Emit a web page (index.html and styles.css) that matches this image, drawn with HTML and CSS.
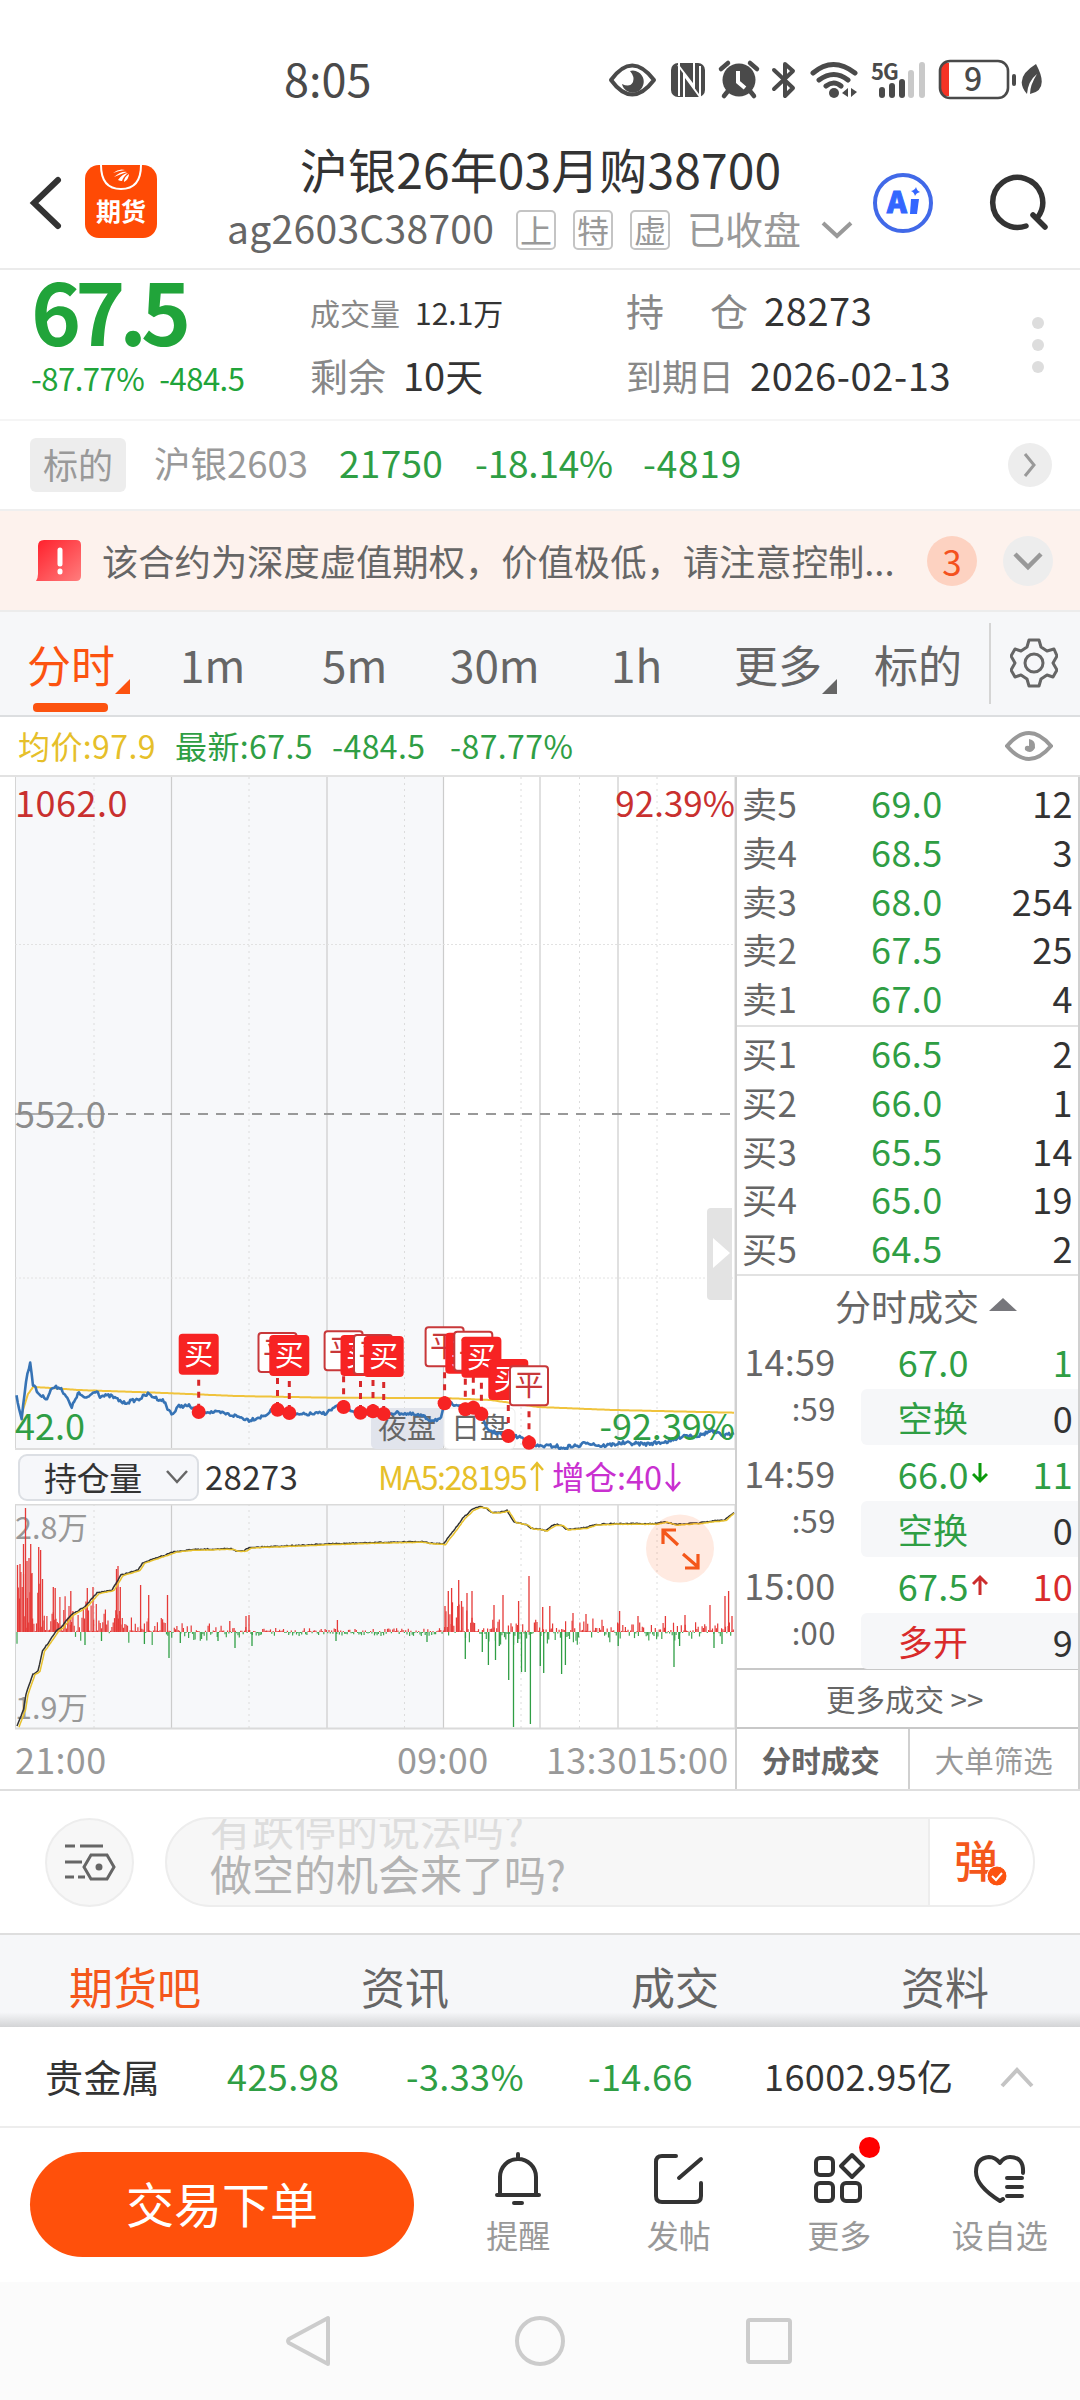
FILE: index.html
```html
<!DOCTYPE html>
<html lang="zh-CN">
<head>
  <meta charset="UTF-8">
  <title>沪银26年03月购38700</title>
  <meta name="viewport" content="width=device-width, initial-scale=1.0">
  <link rel="stylesheet" href="styles.css">
</head>
<body>
  <div class="status-bar">
    <span class="clock">8:05</span>
    <svg class="status-icons" width="450" height="50" viewBox="600 55 450 50">
      <g fill="#4a4a4a">
        <path d="M611 80Q632 51 654 80Q632 109 611 80Z" fill="none" stroke="#4a4a4a" stroke-width="4" stroke-linejoin="round"/>
        <path d="M630 71a11 11 0 1 1-8 13q8 4 11-2q2-5-3-11z"/>
        <rect x="671" y="63" width="34" height="34" rx="7"/>
        <path d="M679 63V96M684 97V75L700 97M678 65L694 86V63M700 66V97" fill="none" stroke="#fff" stroke-width="2"/>
        <circle cx="739" cy="80" r="16.5"/>
        <path d="M721 69l7-6M757 69l-7-6M728 91l-4 5M750 91l4 5" stroke="#4a4a4a" stroke-width="4.5" stroke-linecap="round"/>
        <path d="M738 71v11l7 6" fill="none" stroke="#fff" stroke-width="4"/>
        <path d="M774 70l19 18l-8 8V64l8 7l-19 18" fill="none" stroke="#4a4a4a" stroke-width="4" stroke-linejoin="round" stroke-linecap="round"/>
        <path d="M813 73q20-17 42 0M819 80q15-11 29 0M826 86q8-6 15 0" fill="none" stroke="#4a4a4a" stroke-width="5" stroke-linecap="round"/>
        <circle cx="834" cy="93" r="5"/>
        <path d="M848 88v9l-6-4zM851 88l6 4-6 5z"/>
        <text class="net" x="871" y="80">5G</text>
        <rect x="879" y="87" width="6" height="11" rx="3"/>
        <rect x="889" y="83" width="6" height="15" rx="3"/>
        <rect x="899" y="79" width="6" height="19" rx="3"/>
        <rect x="908" y="70" width="6" height="28" rx="3" fill="#c9c9c9"/>
        <rect x="919" y="62" width="6" height="36" rx="3" fill="#c9c9c9"/>
        <path d="M943 63h6v33h-6q-2-2-2-6V69q0-4 2-6z" fill="#f53325"/>
        <rect x="940" y="61" width="68" height="37" rx="10" fill="none" stroke="#4a4a4a" stroke-width="2.6"/>
        <text class="battery" x="964" y="91">9</text>
        <rect x="1012" y="74" width="4" height="12" rx="2"/>
        <path d="M1036 64q14 26-6 30q0-9 7-20q-9 7-10 20q-14-16 9-30z"/>
      </g>
    </svg>
  </div>

  <header class="header">
    <svg class="back" width="36" height="60" viewBox="0 0 36 60"><path d="M31 8L7 31L31 54" fill="none" stroke="#333" stroke-width="6" stroke-linecap="round"/></svg>
    <div class="logo">
      <svg width="72" height="28" viewBox="0 0 72 28"><path d="M16 0q0 24 20 24t20-24" fill="none" stroke="#fff" stroke-width="2"/><path d="M28 8q6-5 12-3q-7 1-12 3zM29 12q7-6 13-5q-6 2-13 5zM33 15q4-6 10-7q-5 4-6 8q-2 0-4-1zM39 17q0-5 5-8q0 5-5 8z" fill="#fff"/></svg>
      <b>期货</b>
    </div>
    <div class="title">
      <h1>沪银26年03月购38700</h1>
      <div class="subtitle">
        <span class="code">ag2603C38700</span>
        <span class="tag">上</span><span class="tag">特</span><span class="tag">虚</span>
        <span class="closed">已收盘</span>
        <svg width="32" height="20" viewBox="0 0 32 20"><path d="M2 3L16 16L30 3" fill="none" stroke="#999" stroke-width="4"/></svg>
      </div>
    </div>
    <svg class="ai" width="62" height="62" viewBox="0 0 62 62">
      <circle cx="31" cy="31" r="28" fill="none" stroke="#4169e8" stroke-width="4"/>
      <text x="15" y="41">A</text><path d="M39 27h8l-2 15h-7z" fill="#3366ff"/><path d="M44 15q1 4 4 5q-4 1-5 4q-1-4-4-5q4-1 5-4z" fill="#3366ff"/>
    </svg>
    <svg class="search" width="62" height="62" viewBox="0 0 62 62"><path d="M37 55A25 25 0 1 1 49 46M44 44L56 56" fill="none" stroke="#333" stroke-width="5.5" stroke-linecap="round"/></svg>
  </header>

  <section class="quote">
    <div class="price">
      <div class="last">67.5</div>
      <div class="change"><span>-87.77%</span><span>-484.5</span></div>
    </div>
    <div class="stats">
      <div class="stat small"><label>成交量</label><span>12.1万</span></div>
      <div class="stat"><label>剩余</label><span>10天</span></div>
    </div>
    <div class="stats wide">
      <div class="stat"><label class="spread">持<i></i>仓</label><span>28273</span></div>
      <div class="stat date"><label>到期日</label><span>2026-02-13</span></div>
    </div>
    <div class="dots"><i></i><i></i><i></i></div>
  </section>

  <section class="underlying">
    <span class="badge">标的</span>
    <span class="name">沪银2603</span>
    <span class="u1">21750</span>
    <span class="u2">-18.14%</span>
    <span class="u3">-4819</span>
    <span class="round"><svg width="16" height="28" viewBox="0 0 16 28"><path d="M3 3L12 14L3 25" fill="none" stroke="#999" stroke-width="3"/></svg></span>
  </section>

  <section class="notice">
    <svg width="46" height="44" viewBox="0 0 46 44">
      <defs><linearGradient id="warn" x1="0" y1="0" x2="1" y2="1"><stop offset="0" stop-color="#ff1f2b"/><stop offset="1" stop-color="#ff7d7d"/></linearGradient></defs>
      <path d="M8 1h32q5 0 5 5v31q0 5-5 5H0q2-3 2-7V7q0-6 6-6z" fill="url(#warn)"/>
      <path d="M24 11v14M24 32v1" stroke="#fff" stroke-width="5" stroke-linecap="round"/>
    </svg>
    <p>该合约为深度虚值期权，价值极低，请注意控制...</p>
    <span class="count">3</span>
    <span class="fold"><svg width="32" height="20" viewBox="0 0 32 20"><path d="M3 3L16 16L29 3" fill="none" stroke="#999" stroke-width="4.5"/></svg></span>
  </section>

  <nav class="periods">
    <a class="p1 active">分时</a>
    <a class="p2">1m</a>
    <a class="p3">5m</a>
    <a class="p4">30m</a>
    <a class="p5">1h</a>
    <a class="p6">更多</a>
    <a class="p7">标的</a>
    <a class="setting">
      <svg width="48" height="50" viewBox="0 0 48 50" fill="none" stroke="#666" stroke-width="3" stroke-linejoin="round">
        <path d="M19 2h10l2 7l6 4l7-2l3 7l-4 7l4 7l-4 7l-6-2l-6 4l-2 7H19l-2-7l-6-4l-6 2l-4-7l4-7l-4-7l4-7l6 2l6-4z"/>
        <circle cx="24" cy="25" r="9"/>
      </svg>
    </a>
  </nav>

  <div class="latest">
    <span class="avg">均价:97.9</span>
    <span class="l1">最新:67.5</span>
    <span class="l2">-484.5</span>
    <span class="l3">-87.77%</span>
    <svg width="48" height="32" viewBox="0 0 48 32"><path d="M2 16Q24-10 46 16Q24 42 2 16Z" fill="none" stroke="#999" stroke-width="4"/><path d="M24 9q7 1 6 9q-4 7-10 2q-1-5 4-4z" fill="#999"/></svg>
  </div>

  <main class="board">
    <div class="charts">
      <svg id="priceChart" class="price-chart" width="736" height="673" viewBox="0 776 736 673"></svg>
      <div class="indicator">
        <span class="select">持仓量<svg width="24" height="16" viewBox="0 0 24 16"><path d="M2 2L12 13L22 2" fill="none" stroke="#666" stroke-width="2.5"/></svg></span>
        <span class="oi">28273</span>
        <span class="ma">MA5:28195</span>
        <svg width="16" height="32" viewBox="0 0 16 32"><path d="M8 30V2M2 9L8 2L14 9" fill="none" stroke="#e6bf2a" stroke-width="2.4"/></svg>
        <span class="add">增仓:40</span>
        <svg width="18" height="32" viewBox="0 0 18 32"><path d="M9 2V29M2 21L9 29L16 21" fill="none" stroke="#c930d0" stroke-width="2.6"/></svg>
      </div>
      <svg id="volumeChart" class="volume-chart" width="736" height="226" viewBox="0 1503 736 226"></svg>
      <div class="axis"><span>21:00</span><span>09:00</span><span>13:30</span><span>15:00</span></div>
    </div>

    <aside class="depth">
      <div class="orders">
        <div><label>卖5</label><b>69.0</b><span>12</span></div>
        <div><label>卖4</label><b>68.5</b><span>3</span></div>
        <div><label>卖3</label><b>68.0</b><span>254</span></div>
        <div><label>卖2</label><b>67.5</b><span>25</span></div>
        <div><label>卖1</label><b>67.0</b><span>4</span></div>
      </div>
      <div class="orders">
        <div><label>买1</label><b>66.5</b><span>2</span></div>
        <div><label>买2</label><b>66.0</b><span>1</span></div>
        <div><label>买3</label><b>65.5</b><span>14</span></div>
        <div><label>买4</label><b>65.0</b><span>19</span></div>
        <div><label>买5</label><b>64.5</b><span>2</span></div>
      </div>
      <div class="trades-title">分时成交<i></i></div>
      <div class="trades">
        <div class="trade"><time>14:59</time><p><b>67.0</b><span class="green">1</span></p></div>
        <div class="trade sub"><time>:59</time><p><b>空换</b><span>0</span></p></div>
        <div class="trade"><time>14:59</time><p><b>66.0</b><svg width="16" height="22" viewBox="0 0 16 22"><path d="M8 1v18M1 12l7 7l7-7" fill="none" stroke="#0a9a0a" stroke-width="3"/></svg><span class="green">11</span></p></div>
        <div class="trade sub"><time>:59</time><p><b>空换</b><span>0</span></p></div>
        <div class="trade"><time>15:00</time><p><b>67.5</b><svg width="16" height="22" viewBox="0 0 16 22"><path d="M8 21V3M1 10l7-7l7 7" fill="none" stroke="#cc2d2d" stroke-width="3"/></svg><span class="red">10</span></p></div>
        <div class="trade sub"><time>:00</time><p><b class="red">多开</b><span>9</span></p></div>
      </div>
      <div class="more">更多成交 &gt;&gt;</div>
      <div class="depth-tabs"><b>分时成交</b><span>大单筛选</span></div>
    </aside>
  </main>

  <section class="comment">
    <span class="filter">
      <svg width="52" height="40" viewBox="0 0 52 40" fill="none" stroke="#666" stroke-width="3">
        <path d="M1 4h10M16 4h23M1 20h17M1 35h9M14 35h7"/>
        <path d="M27 13h16l7 12l-7 12H27l-7-12z"/><circle cx="35" cy="25" r="2" fill="#666"/>
      </svg>
    </span>
    <div class="field">
      <div class="hints"><p class="old">有跌停的说法吗?</p><p>做空的机会来了吗?</p></div>
      <div class="danmu">弹<svg width="22" height="22" viewBox="0 0 22 22"><circle cx="11" cy="11" r="10" fill="#fc5310" stroke="#fff"/><path d="M6 11l4 4l6-7" fill="none" stroke="#fff" stroke-width="2"/></svg></div>
    </div>
  </section>

  <nav class="sections">
    <a class="active">期货吧</a><a>资讯</a><a>成交</a><a>资料</a>
  </nav>

  <div class="sector">
    <span class="s0">贵金属</span>
    <span class="s1">425.98</span>
    <span class="s2">-3.33%</span>
    <span class="s3">-14.66</span>
    <span class="s4">16002.95亿</span>
    <svg width="36" height="24" viewBox="0 0 36 24"><path d="M3 21L18 5L33 21" fill="none" stroke="#c4c4c4" stroke-width="4"/></svg>
  </div>

  <footer class="actions">
    <button>交易下单</button>
    <a>
      <svg width="54" height="54" viewBox="0 0 54 54" fill="none" stroke="#333" stroke-width="4" stroke-linecap="round"><path d="M9 43V25a18 18 0 0 1 36 0V43M6 43H48M27 2v4M23 51h8"/></svg>
      提醒
    </a>
    <a>
      <svg width="54" height="54" viewBox="0 0 54 54" fill="none" stroke="#333" stroke-width="4" stroke-linecap="round"><path d="M24 4H10q-6 0-6 6V44q0 6 6 6H43q6 0 6-6V31M49 7L27 26"/></svg>
      发帖
    </a>
    <a>
      <svg width="54" height="54" viewBox="0 0 54 54" fill="none" stroke="#333" stroke-width="4" stroke-linejoin="round"><rect x="4" y="6" width="17" height="17" rx="4"/><rect x="4" y="31" width="17" height="18" rx="4"/><rect x="30" y="31" width="18" height="18" rx="4"/><path d="M40 3l11 11l-11 11l-11-11z"/></svg>
      更多<i class="red-dot"></i>
    </a>
    <a>
      <svg width="54" height="54" viewBox="0 0 54 54" fill="none" stroke="#333" stroke-width="4" stroke-linecap="round" stroke-linejoin="round"><path d="M50 21q1-16-13-16q-6 0-10 6q-5-6-11-6Q3 6 3 20q0 14 24 29l3-2"/><path d="M34 26h15M34 35h15M34 44h15"/></svg>
      设自选
    </a>
  </footer>

  <div class="sysnav">
    <svg width="46" height="52" viewBox="0 0 46 52"><path d="M42 3V49L3 28q-2-2 0-4z" fill="none" stroke="#ccc" stroke-width="4" stroke-linejoin="round"/></svg>
    <svg width="52" height="52" viewBox="0 0 52 52"><circle cx="26" cy="26" r="23" fill="none" stroke="#ccc" stroke-width="4"/></svg>
    <svg width="48" height="48" viewBox="0 0 48 48"><rect x="3" y="3" width="42" height="42" rx="2" fill="none" stroke="#ccc" stroke-width="4"/></svg>
  </div>

  <script src="chart.js"></script>
</body>
</html>
```
FILE: styles.css
```css
* {
  box-sizing: border-box;
}
body {
  margin: 0;
  width: 1080px;
  height: 2400px;
  overflow: hidden;
  background: #fff;
  color: #333;
  font-family: "Noto Sans CJK SC", sans-serif;
  white-space: nowrap;
}
h1, p {
  margin: 0;
  font-weight: normal;
}
svg {
  display: block;
  flex: none;
}
i {
  font-style: normal;
}
.green {
  color: #2f9e44;
}

/* status bar */
.status-bar {
  height: 110px;
  padding: 48px 0 0 284px;
  display: flex;
}
.clock {
  width: 316px;
  font-size: 45px;
  line-height: 60px;
  color: #4a4a4a;
}
.status-icons {
  margin-top: 7px;
}
.net {
  font: bold 22px "Noto Sans CJK SC", sans-serif;
  letter-spacing: -1px;
}
.battery {
  font: 500 32px "Noto Sans CJK SC", sans-serif;
}

/* header */
.header {
  height: 160px;
  border-bottom: 2px solid #ebebeb;
  display: flex;
  padding-left: 27px;
}
.back {
  margin-top: 62px;
}
.logo {
  width: 72px;
  height: 73px;
  margin: 55px 0 0 22px;
  border-radius: 14px;
  background: #ff4a05;
  color: #fff;
  text-align: center;
  font-size: 25px;
  line-height: 34px;
}
.title {
  width: 630px;
  margin-left: 70px;
}
h1 {
  font-size: 48px;
  line-height: 60px;
  padding: 28px 0 0 73px;
  letter-spacing: 0.1px;
}
.subtitle {
  display: flex;
  align-items: center;
  height: 56px;
  margin-top: 4px;
}
.code {
  width: 289px;
  margin-top: -6px;
  font-size: 39px;
  letter-spacing: 0.3px;
  color: #666;
}
.tag {
  width: 40px;
  height: 40px;
  margin-right: 17px;
  border: 2px solid #c4c4c4;
  border-radius: 5px;
  color: #999;
  font-size: 32px;
  line-height: 34px;
  text-align: center;
}
.closed {
  width: 134px;
  margin-top: -6px;
  font-size: 38px;
  color: #999;
}
.ai {
  margin: 62px 0 0 15px;
}
.ai text {
  font: 900 30px "Noto Sans CJK SC", sans-serif;
  fill: #3366ff;
  stroke: #3366ff;
}
.search {
  margin: 61px 0 0 55px;
}

/* quote */
.quote {
  height: 151px;
  border-bottom: 2px solid #f5f5f5;
  display: flex;
}
.price {
  width: 310px;
  padding-left: 31px;
  color: #21a43a;
}
.last {
  height: 90px;
  font-size: 85px;
  font-weight: 600;
  line-height: 78px;
  letter-spacing: -6px;
}
.change {
  display: flex;
  gap: 15px;
  font-size: 31px;
  line-height: 36px;
  letter-spacing: -0.5px;
}
.stats {
  width: 316px;
  padding-top: 7px;
}
.stats.wide {
  width: 402px;
}
.stat {
  display: flex;
  height: 65px;
  align-items: center;
  font-size: 38px;
}
.stat label {
  width: 93px;
  color: #888;
}
.stat.small {
  font-size: 30px;
  padding-top: 5px;
}
.stat.small label {
  width: 105px;
}
.wide .stat label {
  width: 138px;
}
.wide .stat span {
  letter-spacing: 0.6px;
}
.spread i {
  display: inline-block;
  width: 46px;
}
.wide .stat.date label {
  width: 124px;
  font-size: 36px;
}
.dots {
  display: flex;
  flex-direction: column;
  gap: 10px;
  padding: 47px 0 0 4px;
}
.dots i {
  width: 12px;
  height: 12px;
  border-radius: 50%;
  background: #ddd;
}

/* underlying */
.underlying {
  height: 90px;
  border-bottom: 2px solid #efefef;
  padding-left: 30px;
  display: flex;
  align-items: center;
  font-size: 37px;
  color: #2f9e44;
}
.badge {
  width: 96px;
  height: 54px;
  border-radius: 6px;
  background: #ededed;
  color: #999;
  text-align: center;
  font-size: 35px;
  line-height: 51px;
}
.name, .u1, .u2, .u3 {
  margin-top: -6px;
}
.name {
  width: 213px;
  padding-left: 28px;
  color: #999;
  font-size: 36.5px;
}
.u1 {
  width: 136px;
  letter-spacing: 0.3px;
}
.u2 {
  width: 168px;
  letter-spacing: -0.2px;
}
.u3 {
  width: 365px;
  letter-spacing: 0.8px;
}
.round {
  width: 44px;
  height: 44px;
  border-radius: 50%;
  background: #ededed;
  display: grid;
  place-items: center;
}

/* notice */
.notice {
  height: 101px;
  border-bottom: 2px solid #ececec;
  background: #fdf2ed;
  padding-left: 36px;
  display: flex;
  align-items: center;
  color: #666;
}
.notice p {
  width: 824px;
  margin-top: -2px;
  padding-left: 20px;
  font-size: 36.3px;
}
.count, .fold {
  width: 50px;
  height: 50px;
  border-radius: 50%;
  display: grid;
  place-items: center;
}
.count {
  margin-left: 21px;
  background: #fdd2c1;
  color: #f4511e;
  font-size: 35px;
  line-height: 48px;
}
.fold {
  margin-left: 26px;
  background: #ededed;
}

/* periods */
.periods {
  height: 105px;
  border-bottom: 2px solid #dcdee0;
  background: #f6f7f9;
  padding-left: 27px;
  display: flex;
  align-items: center;
  font-size: 44px;
  color: #666;
}
.periods a {
  position: relative;
  line-height: 98px;
}
.p1 { width: 153px; }
.p2 { width: 142px; }
.p3 { width: 128px; }
.p4 { width: 161px; }
.p5 { width: 123px; }
.p6 { width: 140px; }
.p7 { width: 115px; }
.periods .active {
  color: #fc5310;
}
.p1::before {
  content: "";
  position: absolute;
  left: 6px;
  bottom: 1px;
  width: 75px;
  height: 9px;
  border-radius: 4px;
  background: #fc5310;
}
.p1::after, .p6::after {
  content: "";
  position: absolute;
  left: 88px;
  bottom: 19px;
  border-left: 15px solid transparent;
  border-bottom: 15px solid currentColor;
}
.periods .setting {
  height: 81px;
  padding: 15px 0 0 19px;
  border-left: 2px solid #d5d5d5;
}

/* latest line */
.latest {
  height: 60px;
  border-bottom: 2px solid #e2e2e2;
  padding-left: 18px;
  display: flex;
  align-items: center;
  font-size: 32px;
  color: #2f9e44;
}
.latest span {
  margin-top: -2px;
  letter-spacing: 0.4px;
}
.avg {
  width: 157px;
  color: #e6bf2a;
}
.l1 { width: 157px; }
.l2 { width: 118px; }
.l3 { width: 555px; }

/* chart board */
.board {
  height: 1014px;
  border-bottom: 2px solid #dedede;
  display: flex;
}
.charts {
  width: 735px;
}
.price-chart text, .volume-chart text {
  font-family: "Noto Sans CJK SC", sans-serif;
}
.indicator {
  height: 54px;
  padding-left: 18px;
  display: flex;
  align-items: center;
  font-size: 33px;
}
.select {
  width: 181px;
  height: 47px;
  border: 2px solid #dcdfe4;
  border-radius: 9px;
  background: #f6f7fa;
  padding-left: 24px;
  display: flex;
  align-items: center;
  gap: 23px;
  line-height: 40px;
  letter-spacing: -0.4px;
}
.oi, .ma, .add {
  margin-top: -3px;
}
.oi {
  width: 179px;
  padding-left: 6px;
  letter-spacing: 0.3px;
}
.ma {
  width: 151px;
  color: #e6bf2a;
  font-size: 32px;
  letter-spacing: -1.4px;
}
.add {
  width: 119px;
  padding-left: 7px;
  color: #c930d0;
  font-size: 32.5px;
}
.axis {
  height: 59px;
  padding-left: 15px;
  display: grid;
  grid-template-columns: 382px 149px 91px 97px;
  font-size: 36px;
  line-height: 57px;
  letter-spacing: 0.3px;
  color: #999;
}

/* depth */
.depth {
  width: 345px;
  border-left: 2px solid #d0d0d0;
  border-right: 2px solid #d0d0d0;
}
.orders {
  height: 250px;
  border-bottom: 2px solid #e2e2e2;
  padding-top: 2px;
}
.orders + .orders {
  height: 249px;
}
.orders div {
  height: 48.8px;
  display: grid;
  grid-template-columns: 129px 100px 1fr;
  padding: 0 5px 0 5px;
  font-size: 36px;
  line-height: 47px;
  letter-spacing: 0.4px;
}
.orders label {
  font-size: 35px;
  color: #666;
}
.orders b, .trade b {
  font-weight: normal;
  color: #2f9e44;
}
.orders span {
  text-align: right;
}
.trades-title {
  height: 57px;
  padding-left: 98px;
  display: flex;
  align-items: center;
  gap: 10px;
  font-size: 36px;
  line-height: 50px;
  color: #666;
}
.trades-title i {
  border: 14px solid transparent;
  border-top: 0;
  border-bottom: 13px solid #77777c;
}
.trades {
  height: 337px;
  border-bottom: 2px solid #c8c8c8;
}
.trade {
  height: 56px;
  display: flex;
  font-size: 36px;
  line-height: 54px;
  letter-spacing: 0.3px;
}
.trade time {
  width: 99px;
  margin-right: 25px;
  text-align: right;
  color: #666;
}
.trade p {
  width: 218px;
  padding: 0 5px 0 37px;
  display: flex;
  align-items: center;
}
.trade b + svg {
  margin-left: 3px;
}
.trade span {
  margin-left: auto;
}
.red, .trade .red {
  color: #d92b2b;
}
.sub time {
  font-size: 31px;
  line-height: 38px;
}
.sub p {
  border-radius: 6px 0 0 6px;
  background: #f6f7f9;
  line-height: 56px;
}
.sub b {
  font-size: 35px;
}
.more {
  height: 59px;
  border-bottom: 2px solid #c8c8c8;
  font-size: 29.5px;
  line-height: 56px;
  color: #666;
  padding-left: 89px;
}
.depth-tabs {
  height: 60px;
  display: grid;
  grid-template-columns: 1fr 1fr;
  font-size: 29.5px;
  line-height: 60px;
  text-align: center;
  color: #666;
}
.depth-tabs b {
  padding-right: 3px;
}
.depth-tabs span {
  border-left: 2px solid #d0d0d0;
  color: #999;
}

/* comment box */
.comment {
  height: 144px;
  border-bottom: 2px solid #dedede;
  padding: 0 44px 0 45px;
  display: flex;
  align-items: center;
}
.filter {
  width: 89px;
  height: 89px;
  margin-right: 31px;
  border: 2px solid #ededed;
  border-radius: 50%;
  background: #f7f7f7;
  display: grid;
  place-items: center;
}
.field {
  width: 870px;
  height: 90px;
  border: 2px solid #ededed;
  border-radius: 45px;
  overflow: hidden;
  background: #f7f7f7;
  display: flex;
}
.hints {
  width: 761px;
  padding-left: 43px;
  font-size: 42px;
  line-height: 44px;
  color: #b3b3b3;
}
.hints .old {
  height: 32px;
  line-height: 18px;
  color: #ddd;
}
.danmu {
  position: relative;
  flex: 1;
  border-left: 2px solid #ededed;
  padding-left: 24px;
  background: #fff;
  color: #f4571b;
  font-size: 44px;
  font-weight: 500;
  line-height: 80px;
}
.danmu svg {
  position: absolute;
  left: 56px;
  top: 46px;
}

/* sections */
.sections {
  height: 92px;
  display: grid;
  grid-template-columns: repeat(4, 270px);
  background: linear-gradient(#f6f7f9 84%, #d3d4d6);
  text-align: center;
  font-size: 44px;
  line-height: 102px;
  color: #666;
}
.sections .active {
  color: #f4571b;
}

/* sector ticker */
.sector {
  height: 101px;
  border-bottom: 2px solid #ededed;
  padding-left: 45px;
  display: flex;
  align-items: center;
  font-size: 36px;
  color: #2f9e44;
}
.sector span {
  margin-top: -3px;
  letter-spacing: 0.4px;
}
.s0 {
  width: 182px;
  font-size: 38px;
}
.sector .s0, .s4 {
  color: #333;
}
.s1 { width: 179px; }
.s2 { width: 182px; }
.s3 { width: 176px; }
.s4 { width: 235px; }

/* bottom actions */
.actions {
  height: 154px;
  padding-left: 30px;
  display: grid;
  grid-template-columns: 408px repeat(4, 160.5px);
}
.actions button {
  width: 384px;
  height: 105px;
  margin-top: 24px;
  padding: 0 0 6px;
  border: 0;
  border-radius: 53px;
  background: #ff500b;
  color: #fff;
  font: 48px/96px "Noto Sans CJK SC", sans-serif;
}
.actions a {
  position: relative;
  display: flex;
  flex-direction: column;
  align-items: center;
  padding-top: 24px;
  font-size: 32px;
  line-height: 57px;
  color: #999;
}
.red-dot {
  position: absolute;
  left: 100px;
  top: 9px;
  width: 21px;
  height: 21px;
  border-radius: 50%;
  background: #f00;
}

/* system navigation */
.sysnav {
  height: 118px;
  padding-left: 286px;
  display: flex;
  align-items: center;
  background: #fbfbfb;
}
.sysnav svg:nth-child(2) {
  margin: 0 179px 0 182px;
}
```
FILE: chart.js
```js
const GRID = [171.5, 327, 443.5, 540, 618];
const DOTTED = [94, 249, 404.5, 521, 579.5, 657];

const price = [
  [16.5,1395],[21.7,1418],[26,1380],[30.2,1361],[33,1383],[38,1392],[43,1396],[47,1397],[52,1387],[60,1386],[66,1395],
  [71.7,1407],[75.5,1397],[79,1392],[85,1398],[96.7,1389],[100,1395],[111,1395],[124,1402],[139,1398],[148,1393],[156,1397],
  [164,1400],[167.5,1408],[173,1413],[179,1405],[189,1405],[198,1410],[222,1412],[236,1415],[249,1419],[264,1415],[271,1410],
  [285,1412],[297,1414],[326,1412],[337,1405],[344,1407],[359,1412],[401,1412],[422,1415],[430,1419],[441,1418],[444.5,1403],
  [458,1403],[467,1408],[481,1413],[486,1427],[493,1431],[508,1435],[521,1436],[528,1441],[535,1445],[557,1445],[561,1448],
  [571,1445],[580,1445],[586,1441],[601,1445],[623,1442],[646,1443],[672,1440],[684,1434],[698,1435],[711,1430],[724,1435],[734,1432]
];
const average = [
  [21,1416],[23.6,1407],[28,1393],[33,1386],[52,1387],[78,1389],[165,1392],[236,1395],[330,1396.7],[443,1397],
  [491,1399],[538,1406],[613,1409],[734,1411.7]
];
// x, dot y, box top, type
const marks = [
  [198.7,1411,1332.7,'买'],[277.5,1408.7,1331,'平'],[289.3,1412,1334,'买'],[343.6,1406,1329.3,'平'],[360.5,1411.7,1334,'买'],
  [373,1410.3,1333,'平'],[383.7,1413,1335,'买'],[444.6,1402.3,1325.3,'平'],[465.3,1408.3,1331.7,'买'],[473.3,1406.7,1329.7,'平'],
  [481.4,1413,1335.7,'买'],[508.3,1435,1358,'买'],[529,1441.7,1364.3,'平']
];
const interest = [
  [17,1725.5],[21,1715],[23.6,1708],[26,1693],[33,1673],[38,1670],[42.5,1650],[51,1638],[57,1629],[61,1626.5],[71,1614],[85,1605.5],
  [97,1592],[112,1589],[121,1574],[138,1569],[142.5,1562],[151,1558.5],[165,1554],[175,1550.5],[193,1548.5],[231,1547.7],[236,1549.7],
  [244,1549.7],[249,1546.5],[283,1545],[330,1543],[378,1541.5],[422,1540.7],[429,1542],[443.5,1543],[455,1528],[462.5,1517.5],
  [472,1508.5],[479,1505.7],[486,1507],[491,1511.5],[500,1511],[507,1509.5],[514,1521],[526,1523.5],[531,1527.5],[540,1528],[545,1529.5],
  [554.5,1523.5],[561.5,1524],[566,1528.5],[585,1526.7],[595,1523.5],[613,1522.7],[654,1522.7],[665,1520.7],[675,1523.5],[698,1522],
  [712.5,1520],[724,1519],[734,1511.7]
];
const ZERO = 1631;
const up = {
  17.5:67, 20:68, 23.5:88, 25.5:124, 27:71, 29:74, 30.7:88, 32:59, 38.7:85, 40.6:82, 42.5:53, 53.3:45, 55.2:44, 70.8:41, 87.3:44, 93:45,
  116.5:63, 118:66, 120.3:45, 140.6:47, 148.7:37, 167.5:37, 229.8:11, 246:16, 249:17, 337.4:12, 445:26, 448.3:41, 451.6:44, 458.7:52,
  461.5:31, 467:39, 472:41, 494:27, 503:37, 518.6:31, 529:56, 542.7:25, 549.8:26, 573:19, 586:18, 619.6:21, 638:16, 665.4:16, 685:17,
  710:27, 725:36, 728.6:41, 732:16
};
const down = {
  85:13, 101.5:9, 144.4:12, 169:26, 180.3:11, 218:9, 235:16, 252:14, 336:9, 427:10, 465.3:27, 482.3:20, 488.4:33, 495.5:28, 499.3:14,
  508.7:48, 513.5:95, 517.7:11, 521.5:40, 525.2:40, 530.4:92, 540.3:34, 543.7:41, 561.6:42, 565.4:33, 618.2:14, 674:35, 679.6:14,
  714:16, 722:12
};

let seed = 7;
function rand() {
  seed = (seed * 16807) % 2147483647;
  return seed / 2147483647;
}

// interpolate minute by minute with a little noise
function minutes(points, noise) {
  const out = [];
  for (let i = 0; i < points.length - 1; i++) {
    const [x0, y0] = points[i];
    const [x1, y1] = points[i + 1];
    const n = Math.max(1, Math.round((x1 - x0) / 1.3));
    for (let k = 0; k < n; k++) {
      const t = k / n;
      out.push((x0 + (x1 - x0) * t).toFixed(1) + ',' + (y0 + (y1 - y0) * t + (rand() - 0.5) * noise).toFixed(1));
    }
  }
  out.push(points[points.length - 1].join(','));
  return out.join(' ');
}

function grid(top, bottom) {
  let s = `<rect x="15" y="${top}" width="428.5" height="${bottom - top}" fill="#f7f8fa"/>`;
  DOTTED.forEach(x => {
    s += `<path d="M${x} ${top}V${bottom}" stroke="#dcdcdc" stroke-dasharray="2 4"/>`;
  });
  GRID.forEach(x => {
    s += `<path d="M${x} ${top}V${bottom}" stroke="#ccc" stroke-width="1.2"/>`;
  });
  s += `<path d="M15.5 ${top}V${bottom}M735 ${top}V${bottom}" stroke="#d5d5d5"/>`;
  return s;
}

function drawPrice() {
  let s = grid(776, 1448);
  s += '<path d="M15 943.5H735M15 1277H735" stroke="#e2e2e2" stroke-dasharray="2 2"/>';
  s += '<path d="M108 1113H735" stroke="#999" stroke-width="1.8" stroke-dasharray="10 8"/><path d="M15 1113H105" stroke="#999" stroke-width="1.5"/>';
  s += '<path d="M15 1448H735" stroke="#dedede" stroke-width="2"/>';
  s += '<rect x="371" y="1407" width="73" height="41" rx="5" fill="#e1e4ec"/><rect x="444" y="1407" width="71" height="41" rx="5" fill="#fff" stroke="#eee"/>';
  s += '<text x="378" y="1438" font-size="29" fill="#666">夜盘</text><text x="451" y="1438" font-size="29" fill="#666">日盘</text>';
  s += `<polyline points="${minutes(average, 0)}" fill="none" stroke="#f0c33c" stroke-width="2"/>`;
  s += `<polyline points="${minutes(price, 3.5)}" fill="none" stroke="#3673b5" stroke-width="2.6" stroke-linejoin="round"/>`;
  marks.forEach(([x, y, top]) => {
    s += `<path d="M${x} ${top + 46}V${y}" stroke="#d8282a" stroke-width="3" stroke-dasharray="6 6"/><circle cx="${x}" cy="${y}" r="7" fill="#f72323"/>`;
  });
  marks.forEach(([x, y, top, type]) => {
    const buy = type === '买';
    s += `<rect x="${x - 19}" y="${top + 1}" width="38" height="39" rx="3" fill="${buy ? '#f72323' : '#fff'}" stroke="${buy ? '#f72323' : '#c8383a'}" stroke-width="2"/>`;
    s += `<text x="${x}" y="${top + 31}" font-size="29" text-anchor="middle" fill="${buy ? '#fff' : '#c8383a'}">${type}</text>`;
  });
  s += '<text x="15" y="816" font-size="36" letter-spacing=".5" fill="#c9302f">1062.0</text><text x="735" y="816" font-size="35" text-anchor="end" fill="#c9302f">92.39%</text>';
  s += '<text x="15" y="1127" font-size="36" letter-spacing=".2" fill="#8c8c8c">552.0</text>';
  s += '<text x="15" y="1439" font-size="36" fill="#2f9e44">42.0</text><text x="735" y="1439" font-size="36" text-anchor="end" fill="#2f9e44">-92.39%</text>';
  s += '<path d="M711 1207H732V1299H711q-4 0-4-4V1211q0-4 4-4z" fill="#e3e3e3"/><path d="M713 1237L730 1252L713 1267z" fill="#fff"/>';
  document.getElementById('priceChart').innerHTML = s;
}

function drawVolume() {
  let s = grid(1503, 1728);
  s += '<path d="M15 1503.5H735M15 1727.5H735" stroke="#dadada" stroke-width="2"/>';
  s += '<text x="15" y="1538" font-size="30.5" fill="#999">2.8万</text><text x="15" y="1718" font-size="30.5" fill="#999">1.9万</text>';
  for (let x = 17; x < 734; x += 1.3) {
    let h = 3;
    if (x < 57) h = 60;
    else if (x < 97) h = 36;
    else if (x < 125) h = 26;
    else if (x < 175) h = 15;
    else if (x < 250) h = 8;
    else if (x >= 443 && x < 475) h = 36;
    else if (x >= 475 && x < 610) h = 13;
    else if (x >= 610) h = 9;
    const r = rand();
    const red = rand() < (x < 165 ? 0.95 : x < 475 && x > 443 ? 0.85 : 0.56);
    const len = 1 + (red ? h : Math.min(h, 12)) * r * r;
    s += `<path d="M${x.toFixed(1)} ${ZERO}v${(red ? -len : len).toFixed(1)}" stroke="${red ? '#e53a38' : '#3fa552'}" stroke-width="1.2"/>`;
  }
  for (const x in up) s += `<path d="M${x} ${ZERO}v-${up[x]}" stroke="#e53a38" stroke-width="1.3"/>`;
  for (const x in down) s += `<path d="M${x} ${ZERO}v${down[x]}" stroke="#2f9e44" stroke-width="1.3"/>`;
  s += `<polyline points="${minutes(interest, 1)}" fill="none" stroke="#333" stroke-width="1.5"/>`;
  s += `<polyline points="${minutes(interest.map(([x, y]) => [Math.min(734, x + 2), y + 0.6]), 0.5)}" fill="none" stroke="#e8c22e" stroke-width="1.5"/>`;
  s += '<circle cx="680" cy="1547.5" r="34" fill="#ff5a14" fill-opacity=".13"/>';
  s += '<path d="M678 1544L663 1530M663 1543V1529H676M683 1553L698 1566M698 1553V1567H685" fill="none" stroke="#f4571b" stroke-width="3.2"/>';
  document.getElementById('volumeChart').innerHTML = s;
}

drawPrice();
drawVolume();
```
